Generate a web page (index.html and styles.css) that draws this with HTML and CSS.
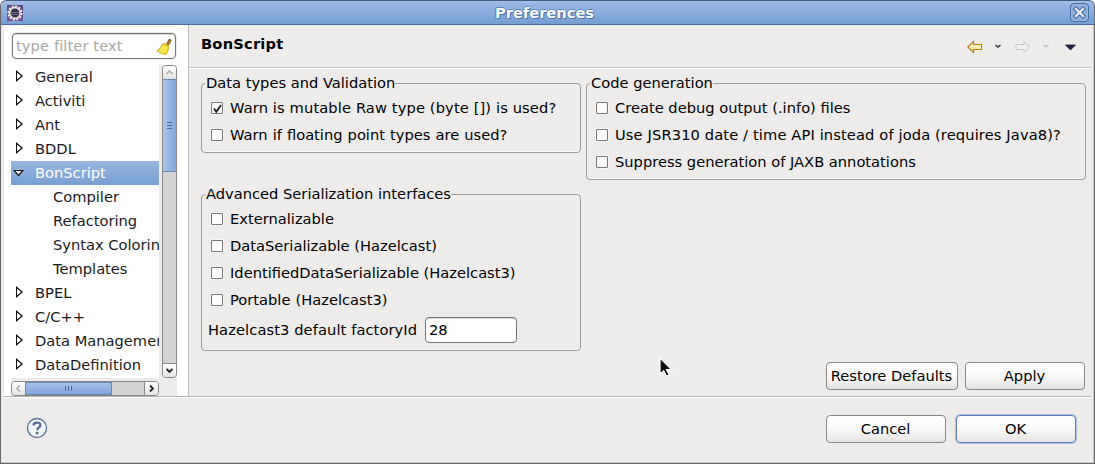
FILE: index.html
```html
<!DOCTYPE html>
<html lang="en">
<head>
<meta charset="utf-8">
<title>Preferences</title>
<link rel="stylesheet" href="styles.css">
</head>
<body>
<div class="window">
  <header class="titlebar">
    <svg class="app-icon" width="16" height="16" viewBox="0 0 16 16">
      <rect width="16" height="16" fill="#5b4a82"/>
      <rect y="11" width="16" height="5" fill="#70529a"/>
      <circle cx="8" cy="8" r="6.7" fill="none" stroke="#f4f2ec" stroke-width="1.7" stroke-dasharray="2.1 1.4"/>
      <circle cx="8" cy="8" r="5.3" fill="#37304f" stroke="#e6e4de" stroke-width="1.7"/>
      <path d="M4 7.5h8M4.3 9.5h7.4" stroke="#756b91"/>
    </svg>
    <h1 class="title">Preferences</h1>
    <button class="close" aria-label="Close"><svg width="13" height="13" viewBox="0 0 13 13"><path d="M3 3l7 7M10 3l-7 7" stroke="#3f6396" stroke-width="4.2" stroke-linecap="square"/><path d="M3 3l7 7M10 3l-7 7" stroke="#e9f0fa" stroke-width="2.3" stroke-linecap="square"/></svg></button>
  </header>
  <div class="main">
    <aside class="sidebar">
      <div class="filter">
        <span class="placeholder">type filter text</span>
        <svg width="16" height="17" viewBox="0 0 16 17">
          <path d="M10 7L13 1.5Q15 .5 15 2.5L12 8Z" fill="#c17d35" stroke="#7d4a17" stroke-width=".9"/>
          <path d="M7 5.5L13 9Q12 14 10 16.5Q5 16 1 13Q5 10 7 5.5Z" fill="#f4df35" stroke="#c9a812" stroke-width=".9"/>
          <path d="M8 7.5Q7 11 4 13M10 9Q9 12.5 7 14.5" fill="none" stroke="#fff9a0"/>
          <path d="M7.5 5.2L13 8.3" stroke="#e5b921" stroke-width="1.3"/>
        </svg>
      </div>
      <div class="tree-area">
        <div class="tree-col">
          <ul class="tree">
            <li><i class="closed"></i>General</li>
            <li><i class="closed"></i>Activiti</li>
            <li><i class="closed"></i>Ant</li>
            <li><i class="closed"></i>BDDL</li>
            <li class="selected"><i class="open"></i>BonScript</li>
            <li class="child">Compiler</li>
            <li class="child">Refactoring</li>
            <li class="child">Syntax Coloring</li>
            <li class="child">Templates</li>
            <li><i class="closed"></i>BPEL</li>
            <li><i class="closed"></i>C/C++</li>
            <li><i class="closed"></i>Data Management</li>
            <li><i class="closed"></i>DataDefinition</li>
          </ul>
          <div class="hbar">
            <span class="step"><svg width="7" height="7" viewBox="0 0 7 7"><path d="M5 .5L2 3.5l3 3" class="faint"/></svg></span>
            <span class="thumb"><svg width="7" height="5" viewBox="0 0 7 5"><path d="M.5 0v5M3.5 0v5M6.5 0v5" class="grip"/></svg></span>
            <span class="track"></span>
            <span class="step"><svg width="7" height="7" viewBox="0 0 7 7"><path d="M2 .5l3 3-3 3" class="strong"/></svg></span>
          </div>
        </div>
        <div class="vcol">
          <div class="vbar">
            <span class="step"><svg width="7" height="7" viewBox="0 0 7 7"><path d="M.5 5l3-3 3 3" class="faint"/></svg></span>
            <span class="thumb"><svg width="5" height="7" viewBox="0 0 5 7"><path d="M0 .5h5M0 3.5h5M0 6.5h5" class="grip"/></svg></span>
            <span class="track"></span>
            <span class="step"><svg width="7" height="7" viewBox="0 0 7 7"><path d="M.5 2l3 3 3-3" class="strong"/></svg></span>
          </div>
        </div>
      </div>
    </aside>
    <section class="page">
      <div class="page-head">
        <h2>BonScript</h2>
        <svg class="nav" width="110" height="16" viewBox="0 0 110 16">
          <defs><linearGradient id="gold" x2="0" y2="1"><stop offset="0" stop-color="#fffef0"/><stop offset="1" stop-color="#fcdf80"/></linearGradient></defs>
          <path d="M.8 8L6.5 2.5V5.500H14.500V10.500H6.500V13.500Z" fill="url(#gold)" stroke="#bd8019" stroke-width="1.2"/>
          <path d="M28.500 6l2.500 2 2.500-2" fill="none" stroke="#333" stroke-width="1.500"/>
          <path d="M62.500 8L57 2.500V5.500H49V10.500H57V13.500Z" fill="#efefed" stroke="#c9c7c4"/>
          <path d="M76.500 6l2.500 2 2.500-2" fill="none" stroke="#bbb9b6" stroke-width="1.300"/>
          <path d="M98.500 6H108.500L103.500 11Z" fill="#26213d" stroke="#15131c" stroke-width=".7"/>
        </svg>
      </div>
      <div class="groups">
        <div class="left">
          <fieldset>
            <legend>Data types and Validation</legend>
            <label class="loose"><span class="box"><svg width="12" height="12" viewBox="0 0 12 12"><path d="M2 5.500l2.300 3.300L9 2" fill="none" stroke="#222" stroke-width="1.800"/></svg></span>Warn is mutable Raw type (byte []) is used?</label>
            <label class="semi"><span class="box"></span>Warn if floating point types are used?</label>
          </fieldset>
          <fieldset class="advanced">
            <legend>Advanced Serialization interfaces</legend>
            <label><span class="box"></span>Externalizable</label>
            <label><span class="box"></span>DataSerializable (Hazelcast)</label>
            <label><span class="box"></span>IdentifiedDataSerializable (Hazelcast3)</label>
            <label class="semi"><span class="box"></span>Portable (Hazelcast3)</label>
            <div class="factory"><span>Hazelcast3 default factoryId</span><input class="field" value="28"></div>
          </fieldset>
        </div>
        <fieldset class="right">
          <legend>Code generation</legend>
          <label><span class="box"></span>Create debug output (.info) files</label>
          <label class="loose"><span class="box"></span>Use JSR310 date / time API instead of joda (requires Java8)?</label>
          <label><span class="box"></span>Suppress generation of JAXB annotations</label>
        </fieldset>
      </div>
      <div class="page-actions">
        <button class="btn wide">Restore Defaults</button>
        <button class="btn">Apply</button>
      </div>
    </section>
  </div>
  <footer class="footer">
    <svg width="22" height="22" viewBox="0 0 22 22"><circle cx="11" cy="11" r="9.500" fill="#f3f4f6" stroke="#5d7296" stroke-width="1.300"/><path d="M7.500 8.400Q7.600 5.600 11 5.600Q14.400 5.600 14.400 8.200Q14.400 9.800 12.600 10.700Q11.200 11.500 11.200 13.200" fill="none" stroke="#566f9b" stroke-width="2.400"/><rect x="9.800" y="14.800" width="2.700" height="2.500" fill="#566f9b"/></svg>
    <div class="dialog-actions">
      <button class="btn">Cancel</button>
      <button class="btn default">OK</button>
    </div>
  </footer>
  <svg class="cursor" width="15" height="21" viewBox="0 0 15 21"><path d="M1 1V17L4.700 13.700L7.500 19.300L10.200 18L7.500 12.700H12.600Z" fill="#0c0c0c" stroke="#fff" stroke-width="1.200"/></svg>
</div>
</body>
</html>
```
FILE: styles.css
```css
* { box-sizing: border-box; }
html { background: #fff; }
body { margin: 0; font: 14.67px/17px "DejaVu Sans", sans-serif; color: #1a1a1a; }
button, input { font: inherit; color: inherit; }
svg { display: block; flex: none; }

.window {
  position: relative;
  display: flex;
  flex-direction: column;
  width: 1095px;
  height: 464px;
  background: #edeceb;
  border: solid #696765;
  border-width: 0 1px 1px;
  border-radius: 6px 6px 0 0;
  overflow: hidden;
  box-shadow: inset -1px -1px #c8c5c2;
}
.titlebar {
  display: flex;
  align-items: center;
  height: 25px;
  margin: 0 -1px;
  padding: 0 6px 0 7px;
  border: 1px solid #4a6ea3;
  border-top-color: #415a80;
  border-radius: 6px 6px 0 0;
  background: linear-gradient(#a9c4ea, #98b7e2 2px, #8aaddb 50%, #749dd0);
}
.app-icon { margin-left: -1px; }
.title {
  flex: 1;
  margin: 0;
  padding-right: 4px;
  text-align: center;
  font-size: 14.67px;
  line-height: 22px;
  color: #fff;
  text-shadow: 1px 1px #4770a9, -1px 0 #4f79b1, 0 -1px #5f88bd;
}
.close {
  display: grid;
  place-items: center;
  width: 19px;
  height: 19px;
  margin-right: -1px;
  padding: 0;
  border: 1px solid #456a9e;
  border-radius: 4px;
  background: #8aacd9;
  box-shadow: inset 0 0 0 1px #99b9e2;
}

.main { display: flex; height: 371px; }
.sidebar {
  width: 185px;
  margin-left: 3px;
  padding: 8px 0 0 7px;
  background: #fff;
  border-right: 1px solid #c0bdba;
}
.filter {
  display: flex;
  align-items: center;
  justify-content: space-between;
  width: 164px;
  height: 26px;
  margin-left: 1px;
  padding: 0 3px 0 3px;
  border: 1px solid #777471;
  border-radius: 4px;
  box-shadow: inset 0 1px #d9d7d5, 0 0 0 1px #eeedeb;
}
.placeholder { padding-bottom: 1px; color: #aaa8a5; letter-spacing: .1px; }
.tree-area { display: flex; width: 166px; height: 331px; margin-top: 6px; }
.tree-col { width: 148px; }
.tree {
  height: 313px;
  margin: 0;
  padding: 0;
  overflow: hidden;
  list-style: none;
}
.tree li { display: flex; align-items: center; height: 24px; padding-bottom: 2px; white-space: nowrap; }
.tree .child { padding-left: 42px; }
.tree .selected { color: #fff; background: linear-gradient(#98b7e1, #789fd2); }
.closed, .open { display: grid; align-items: center; flex: none; width: 24px; height: 12px; }
.closed::before { content: ""; grid-area: 1/1; width: 7px; height: 12px; margin-left: 5px; background: #111; clip-path: polygon(0 0, 100% 50%, 0 100%); }
.closed::after { content: ""; grid-area: 1/1; width: 4px; height: 7px; margin-left: 6px; background: #fff; clip-path: polygon(0 0, 100% 50%, 0 100%); }
.open { padding-top: 2px; }
.open::before { content: ""; grid-area: 1/1; width: 12px; height: 7px; margin-left: 1.5px; background: #111; clip-path: polygon(0 0, 100% 0, 50% 100%); }
.open::after { content: ""; grid-area: 1/1; width: 7px; height: 4px; margin: 0 0 1px 4px; background: #fff; clip-path: polygon(0 0, 100% 0, 50% 100%); }

.hbar, .vbar { display: flex; overflow: hidden; border: 1px solid #8a8784; border-radius: 4px; background: #d4d3d1; }
.hbar { height: 15px; margin-top: 3px; }
.tree-col { background: linear-gradient(#fff 313px, #edeceb 313px); }
.vcol { width: 18px; padding-left: 3px; background: #edeceb; }
.vbar { flex-direction: column; width: 15px; height: 313px; }
.step { display: grid; place-items: center; flex: none; width: 13px; height: 13px; background: linear-gradient(#fff, #e5e4e2); }
.thumb { display: grid; place-items: center; flex: none; border: 1px solid #6389bd; }
.hbar .thumb { width: 87px; background: linear-gradient(#a4c1e9, #80a6da); }
.vbar .thumb { height: 93px; width: 13px; border-width: 1px 0; background: linear-gradient(90deg, #a8c5ec, #80a6da); }
.track { flex: 1; }
.hbar .step:last-child { border-left: 1px solid #8a8784; width: 14px; }
.vbar .step:last-child { border-top: 1px solid #8a8784; height: 14px; }
.faint { fill: none; stroke: #aaa8a5; stroke-width: 1.5; }
.strong { fill: none; stroke: #222; stroke-width: 1.8; }
.grip { stroke: #456a9e; }

.page { display: flex; flex: 1; flex-direction: column; color: #000; }
.page-head {
  display: flex;
  justify-content: space-between;
  height: 44px;
  margin-right: 3px;
  padding: 10px 14px 0 12px;
  border-bottom: 1px solid #fff;
  box-shadow: inset 0 -1px #c0bdba;
}
h2 { margin: 0; font-size: 14.67px; line-height: 17px; letter-spacing: .2px; }
.nav { margin-top: 4px; }
.groups { display: grid; grid-template-columns: 380px 500px; column-gap: 5px; align-items: start; padding: 6px 0 0 12px; }
.left { display: grid; row-gap: 33px; }
fieldset {
  min-width: 0;
  margin: 0;
  padding: 2px 0 4px 9px;
  border: 1px solid #9c9996;
  border-radius: 4px;
  box-shadow: inset 0 -1px #f9f8f7;
}
legend { margin-left: -6px; padding: 0 0 2px 1px; height: 17px; line-height: 15px; white-space: nowrap; }
label { display: flex; align-items: center; gap: 7px; height: 27px; white-space: nowrap; }
.loose { letter-spacing: .12px; }
.semi { word-spacing: .4px; }
.box { display: grid; place-items: center; width: 12px; height: 12px; margin-top: 1px; border: 1px solid #777471; border-radius: 1px; background: #fff; box-shadow: 0 0 0 1px #f7f6f5; }
.advanced { padding-bottom: 7px; }
.factory { display: flex; align-items: center; justify-content: space-between; width: 309px; margin: 4px 0 0 -3px; height: 26px; white-space: nowrap; }
.factory span { padding-bottom: 1px; letter-spacing: .09px; }
.field { width: 92px; height: 26px; padding: 0 3px 1px; border: 1px solid #777471; border-radius: 4px; background: #fff; box-shadow: inset 0 1px #d9d7d5; }
.page-actions { display: flex; gap: 7px; justify-content: flex-end; margin: auto 9px 6px 0; }
.btn {
  width: 120px;
  height: 28px;
  padding: 0 1px 2px 0;
  border: 1px solid #8a8784;
  border-radius: 4px;
  background: linear-gradient(#fff, #fafafa 45%, #e5e4e2);
  color: #000;
  white-space: nowrap;
}
.wide { width: 132px; }
.default { border-color: #5f82b4; box-shadow: 0 0 0 1px #a9c2e4; }

.footer {
  display: flex;
  flex: 1;
  align-items: flex-start;
  justify-content: space-between;
  margin: 0 3px;
  padding: 18px 15px 0 22px;
  border-top: 1px solid #b5b2af;
  box-shadow: inset 0 1px #fff;
}
.footer > svg { margin-top: 2px; }
.dialog-actions { display: flex; gap: 10px; }
.cursor { position: absolute; left: 658px; top: 357px; }
```
